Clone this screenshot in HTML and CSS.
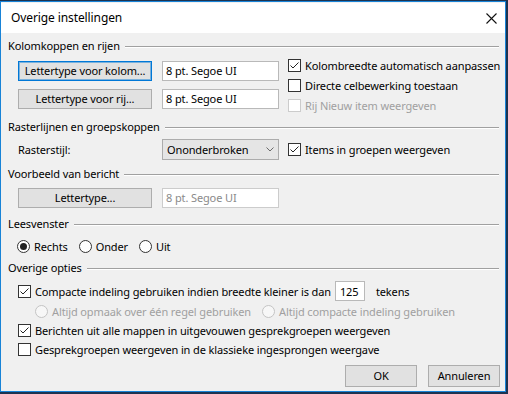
FILE: index.html
```html
<!DOCTYPE html>
<html lang="nl">
<head>
<meta charset="utf-8">
<title>Overige instellingen</title>
<link rel="stylesheet" href="styles.css">
</head>
<body>
<div class="window">
  <div class="titlebar">
    <span class="title">Overige instellingen</span>
    <svg class="close" width="11" height="11" viewBox="0 0 11 11"><path d="M0.5 0.5 L10.5 10.5 M10.5 0.5 L0.5 10.5" stroke="#111" stroke-width="1.1" fill="none"/></svg>
  </div>
  <div class="content">
    <div class="group-h h1"><span>Kolomkoppen en rijen</span><i class="rule"></i></div>
    <div class="sec1">
      <div class="ctl-col">
        <div class="pair"><div class="btn focused">Lettertype voor kolom...</div><div class="tb">8 pt. Segoe UI</div></div>
        <div class="pair"><div class="btn">Lettertype voor rij...</div><div class="tb">8 pt. Segoe UI</div></div>
      </div>
      <div class="chk-col">
        <label class="chk"><span class="box checked"><svg viewBox="0 0 13 13"><polyline points="2.5,6.5 5,9 10.5,3.5" /></svg></span>Kolombreedte automatisch aanpassen</label>
        <label class="chk"><span class="box"></span>Directe celbewerking toestaan</label>
        <label class="chk disabled"><span class="box"></span>Rij Nieuw item weergeven</label>
      </div>
    </div>

    <div class="group-h h2"><span>Rasterlijnen en groepskoppen</span><i class="rule"></i></div>
    <div class="row r2">
      <span class="lbl">Rasterstijl:</span>
      <div class="dd"><span>Ononderbroken</span><svg width="8" height="5" viewBox="0 0 8 5"><polyline points="0.5,0.5 4,4 7.5,0.5" fill="none" stroke="#6a6a6a" stroke-width="1"/></svg></div>
      <label class="chk after-dd"><span class="box checked"><svg viewBox="0 0 13 13"><polyline points="2.5,6.5 5,9 10.5,3.5" /></svg></span>Items in groepen weergeven</label>
    </div>

    <div class="group-h h3"><span>Voorbeeld van bericht</span><i class="rule"></i></div>
    <div class="row r3">
      <div class="pair"><div class="btn">Lettertype...</div><div class="tb disabled">8 pt. Segoe UI</div></div>
    </div>

    <div class="group-h h4"><span>Leesvenster</span><i class="rule"></i></div>
    <div class="row r4">
      <label class="rad"><span class="circle on"></span>Rechts</label>
      <label class="rad"><span class="circle"></span>Onder</label>
      <label class="rad"><span class="circle"></span>Uit</label>
    </div>

    <div class="group-h h5"><span>Overige opties</span><i class="rule"></i></div>
    <div class="row r5">
      <label class="chk"><span class="box checked"><svg viewBox="0 0 13 13"><polyline points="2.5,6.5 5,9 10.5,3.5" /></svg></span>Compacte indeling gebruiken indien breedte kleiner is dan</label>
      <div class="num">125</div>
      <span class="unit">tekens</span>
    </div>
    <div class="row r6">
      <label class="rad disabled first"><span class="circle"></span>Altijd opmaak over één regel gebruiken</label>
      <label class="rad disabled"><span class="circle"></span>Altijd compacte indeling gebruiken</label>
    </div>
    <div class="row r7">
      <label class="chk"><span class="box checked"><svg viewBox="0 0 13 13"><polyline points="2.5,6.5 5,9 10.5,3.5" /></svg></span>Berichten uit alle mappen in uitgevouwen gesprekgroepen weergeven</label>
    </div>
    <div class="row r7">
      <label class="chk"><span class="box"></span>Gesprekgroepen weergeven in de klassieke ingesprongen weergave</label>
    </div>

    <div class="footer">
      <div class="btn small">OK</div>
      <div class="btn small">Annuleren</div>
    </div>
  </div>
</div>
</body>
</html>
```

FILE: styles.css
```css
* { box-sizing: border-box; }
html, body { margin: 0; padding: 0; }
body {
  width: 508px;
  height: 394px;
  overflow: hidden;
  background: #1d3350;
  font-family: "Noto Sans", "Open Sans", sans-serif;
  font-size: 11px;
  letter-spacing: -0.12px;
  color: #000;
}
.window {
  margin-top: 1px;
  width: 506px;
  height: 391px;
  border: 1px solid #1883d7;
  background: #f0f0f0;
  display: flex;
  flex-direction: column;
}
.titlebar {
  height: 30px;
  margin-top: 1px;
  background: #fff;
  display: flex;
  align-items: center;
  padding-left: 10px;
  padding-right: 8px;
  flex: none;
}
.title { line-height: 16px; font-size: 12px; letter-spacing: -0.1px; }
.close { margin-left: auto; }

.content {
  padding: 0 5px 0 7px;
  display: flex;
  flex-direction: column;
}

.group-h {
  display: flex;
  align-items: center;
  height: 16px;
  gap: 5px;
  line-height: 16px;
  white-space: nowrap;
}
.group-h .rule {
  flex: 1;
  height: 2px;
  border-top: 1px solid #a0a0a0;
  border-bottom: 1px solid #fff;
  margin-right: 1px;
  margin-top: 1px;
}
.h1 { margin-top: 5px; }
.h2 { margin-top: 4px; }
.h3 { margin-top: 7px; }
.h4 { margin-top: 8px; }
.h5 { margin-top: 4px; }

.sec1 { display: flex; padding-left: 10px; }
.ctl-col {
  padding-top: 7px;
  display: flex;
  flex-direction: column;
  gap: 8px;
}
.pair { display: flex; gap: 10px; }
.chk-col {
  margin-left: 9px;
  padding-top: 1px;
  display: flex;
  flex-direction: column;
}

.btn {
  width: 134px;
  height: 20px;
  background: #e1e1e1;
  border: 1px solid #adadad;
  display: flex;
  align-items: center;
  justify-content: center;
  line-height: 16px;
  white-space: nowrap;
}
.btn.focused {
  border-color: #0078d7;
  box-shadow: inset 0 0 0 1px rgba(0, 120, 215, 0.45);
}
.btn.small { width: 72px; height: 22px; }

.tb {
  width: 117px;
  height: 20px;
  background: #fff;
  border: 1px solid #b9b9b9;
  padding-left: 3px;
  display: flex;
  align-items: center;
  line-height: 16px;
  white-space: nowrap;
}
.tb.disabled { color: #8a8a8a; border-color: #cccccc; }

.chk {
  display: flex;
  align-items: center;
  height: 20px;
  gap: 4px;
  white-space: nowrap;
}
.box {
  width: 13px;
  height: 13px;
  border: 1px solid #333;
  background: #fff;
  flex: none;
  display: block;
  position: relative;
}
.box svg {
  position: absolute;
  left: -1px;
  top: -1px;
  width: 13px;
  height: 13px;
  fill: none;
  stroke: #222;
  stroke-width: 1;
}
.chk.disabled { color: #a0a0a0; }
.chk.disabled .box { border-color: #cccccc; }

.row { display: flex; align-items: center; padding-left: 10px; white-space: nowrap; }
.r2 { margin-top: 4px; height: 20px; }
.lbl { width: 144px; }
.dd {
  width: 117px;
  height: 21px;
  background: #e5e5e5;
  border: 1px solid #acacac;
  padding: 0 4px 0 4px;
  display: flex;
  align-items: center;
  justify-content: space-between;
}
.after-dd { margin-left: 9px; }
.r3 { margin-top: 6px; }
.r4 { margin-top: 4px; height: 20px; gap: 11px; padding-left: 9px; }

.rad {
  display: flex;
  align-items: center;
  gap: 4px;
  height: 20px;
}
.circle {
  width: 13px;
  height: 13px;
  border: 1px solid #333;
  border-radius: 50%;
  background: #fff;
  flex: none;
  display: flex;
  align-items: center;
  justify-content: center;
}
.circle.on::after {
  content: "";
  width: 7px;
  height: 7px;
  border-radius: 50%;
  background: #222;
}
.rad.disabled { color: #a0a0a0; }
.rad.disabled .circle { border-color: #c4c4c4; background: #f7f7f7; }

.r5 { margin-top: 5px; height: 20px; }
.num {
  width: 30px;
  height: 20px;
  margin-left: 4px;
  background: #fff;
  border: 1px solid #b9b9b9;
  padding-left: 4px;
  display: flex;
  align-items: center;
}
.unit { margin-left: 11px; }
.r6 { height: 20px; padding-left: 27px; }
.rad.first { width: 227px; }
.r7 { height: 19px; }

.footer {
  margin-top: 6px;
  display: flex;
  justify-content: flex-end;
  gap: 11px;
}
```
